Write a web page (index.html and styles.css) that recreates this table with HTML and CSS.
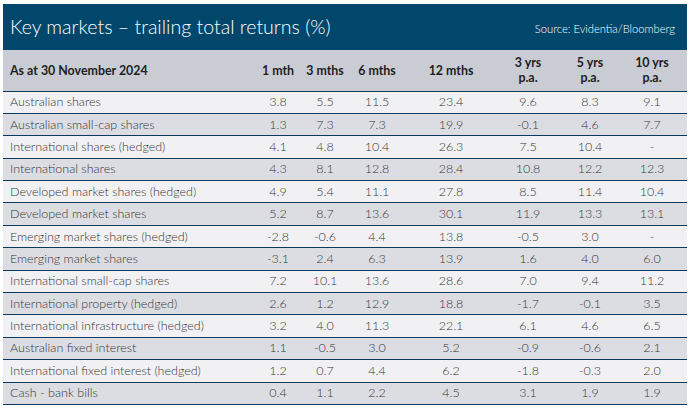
FILE: index.html
```html
<!DOCTYPE html>
<html>
<head>
<meta charset="utf-8">
<link rel="stylesheet" href="styles.css">
</head>
<body>
<div class="panel">
  <div class="banner">
    <h1 class="title">Key markets – trailing total returns (%)</h1>
    <span class="source">Source: Evidentia/Bloomberg</span>
  </div>
  <table class="returns">
    <colgroup>
      <col class="c-label"><col class="c1"><col class="c2"><col class="c3"><col class="c4"><col class="c5"><col class="c6"><col class="c7">
    </colgroup>
    <thead>
      <tr>
        <th class="label">As at 30 November 2024</th>
        <th>1 mth</th><th>3 mths</th><th>6 mths</th><th>12 mths</th>
        <th>3 yrs<br>p.a.</th><th>5 yrs<br>p.a.</th><th>10 yrs<br>p.a.</th>
      </tr>
    </thead>
    <tbody>
      <tr><td class="label">Australian shares</td><td>3.8</td><td>5.5</td><td>11.5</td><td>23.4</td><td>9.6</td><td>8.3</td><td>9.1</td></tr>
      <tr><td class="label">Australian small-cap shares</td><td>1.3</td><td>7.3</td><td>7.3</td><td>19.9</td><td>-0.1</td><td>4.6</td><td>7.7</td></tr>
      <tr><td class="label">International shares (hedged)</td><td>4.1</td><td>4.8</td><td>10.4</td><td>26.3</td><td>7.5</td><td>10.4</td><td>-</td></tr>
      <tr><td class="label">International shares</td><td>4.3</td><td>8.1</td><td>12.8</td><td>28.4</td><td>10.8</td><td>12.2</td><td>12.3</td></tr>
      <tr><td class="label">Developed market shares (hedged)</td><td>4.9</td><td>5.4</td><td>11.1</td><td>27.8</td><td>8.5</td><td>11.4</td><td>10.4</td></tr>
      <tr><td class="label">Developed market shares</td><td>5.2</td><td>8.7</td><td>13.6</td><td>30.1</td><td>11.9</td><td>13.3</td><td>13.1</td></tr>
      <tr><td class="label">Emerging market shares (hedged)</td><td>-2.8</td><td>-0.6</td><td>4.4</td><td>13.8</td><td>-0.5</td><td>3.0</td><td>-</td></tr>
      <tr><td class="label">Emerging market shares</td><td>-3.1</td><td>2.4</td><td>6.3</td><td>13.9</td><td>1.6</td><td>4.0</td><td>6.0</td></tr>
      <tr><td class="label">International small-cap shares</td><td>7.2</td><td>10.1</td><td>13.6</td><td>28.6</td><td>7.0</td><td>9.4</td><td>11.2</td></tr>
      <tr><td class="label">International property (hedged)</td><td>2.6</td><td>1.2</td><td>12.9</td><td>18.8</td><td>-1.7</td><td>-0.1</td><td>3.5</td></tr>
      <tr><td class="label">International infrastructure (hedged)</td><td>3.2</td><td>4.0</td><td>11.3</td><td>22.1</td><td>6.1</td><td>4.6</td><td>6.5</td></tr>
      <tr><td class="label">Australian fixed interest</td><td>1.1</td><td>-0.5</td><td>3.0</td><td>5.2</td><td>-0.9</td><td>-0.6</td><td>2.1</td></tr>
      <tr><td class="label">International fixed interest (hedged)</td><td>1.2</td><td>0.7</td><td>4.4</td><td>6.2</td><td>-1.8</td><td>-0.3</td><td>2.0</td></tr>
      <tr><td class="label">Cash - bank bills</td><td>0.4</td><td>1.1</td><td>2.2</td><td>4.5</td><td>3.1</td><td>1.9</td><td>1.9</td></tr>
    </tbody>
  </table>
</div>
</body>
</html>
```

FILE: styles.css
```css
html, body {
  margin: 0;
  padding: 0;
  background: #ffffff;
}

body {
  font-family: "Lato", "Noto Sans", "Liberation Sans", sans-serif;
}

.panel {
  width: 684px;
  margin: 4px 0 0 3px;
}

.banner {
  height: 46px;
  background: #00476b;
  display: flex;
  align-items: flex-end;
  justify-content: space-between;
  padding: 0 12px 0 7px;
  box-sizing: border-box;
}

.title {
  margin: 0 0 11px 0;
  font-size: 19.6px;
  font-weight: 300;
  color: #ffffff;
  line-height: 24px;
}

.source {
  font-size: 11.2px;
  font-weight: 300;
  color: #ffffff;
  margin-bottom: 15px;
  line-height: 13px;
}

.returns {
  width: 684px;
  border-collapse: collapse;
  table-layout: fixed;
}

.c-label { width: 248px; }
.c1 { width: 54px; }
.c2 { width: 40px; }
.c3 { width: 64px; }
.c4 { width: 84px; }
.c5 { width: 70px; }
.c6 { width: 54px; }
.c7 { width: 70px; }

.returns thead tr {
  background: #c9ccd3;
  height: 41px;
}

.returns th {
  font-size: 12.4px;
  font-weight: 700;
  color: #1e1e24;
  text-align: center;
  line-height: 15px;
  padding: 0;
  border-bottom: 1.5px solid #0c3a5c;
  white-space: nowrap;
}

.returns th.label {
  text-align: left;
  padding-left: 7px;
}

.returns tbody tr {
  height: 22.4px;
}

.returns tbody tr:nth-child(odd) {
  background: #f1f1f3;
}

.returns tbody tr:nth-child(even) {
  background: #dcdde2;
}

.returns td {
  font-size: 12.5px;
  font-weight: 300;
  color: #36363a;
  text-align: center;
  padding: 0;
  line-height: 14px;
  border-bottom: 1.5px solid #0c3a5c;
  white-space: nowrap;
}

.returns td.label {
  text-align: left;
  padding-left: 7px;
}
```
